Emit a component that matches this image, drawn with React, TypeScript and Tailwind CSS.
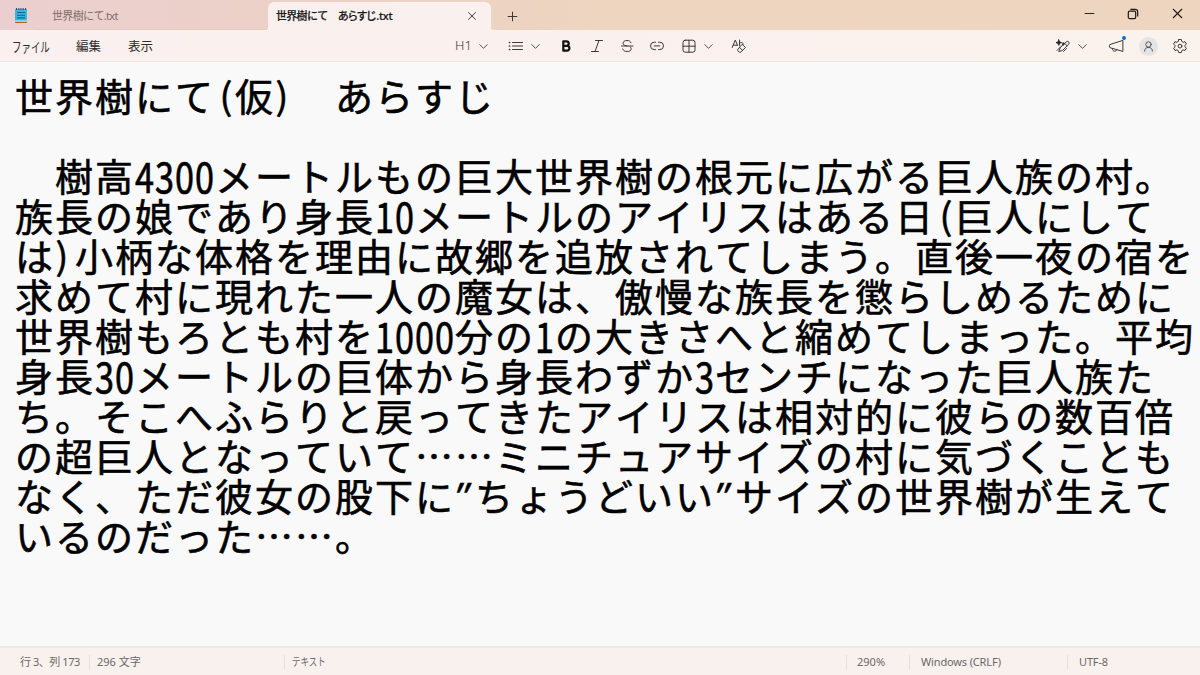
import React from "react";
import { ChevronDown, Minus, Plus, X } from "lucide-react";

const LINES = [
  "世界樹にて(仮)　あらすじ",
  "",
  "　樹高4300メートルもの巨大世界樹の根元に広がる巨人族の村。",
  "族長の娘であり身長10メートルのアイリスはある日(巨人にして",
  "は)小柄な体格を理由に故郷を追放されてしまう。直後一夜の宿を",
  "求めて村に現れた一人の魔女は、傲慢な族長を懲らしめるために",
  "世界樹もろとも村を1000分の1の大きさへと縮めてしまった。平均",
  "身長30メートルの巨体から身長わずか3センチになった巨人族た",
  "ち。そこへふらりと戻ってきたアイリスは相対的に彼らの数百倍",
  "の超巨人となっていて……ミニチュアサイズの村に気づくことも",
  "なく、ただ彼女の股下に\"ちょうどいい\"サイズの世界樹が生えて",
  "いるのだった……。",
];

// Half-width characters take exactly half of a full-width cell
function HalfChar({ char }: { char: string }) {
  let shape = "scale-x-[0.9] scale-y-[1.1]";
  if (char === "(") shape = "translate-x-[1px] scale-y-[0.96]";
  if (char === ")") shape = "-translate-x-[3px] scale-y-[0.96]";
  if (char === '"') shape = "-translate-x-[4px] -translate-y-[1px] -skew-x-[20deg] scale-y-[0.85]";

  return (
    <span className="inline-flex w-5 justify-center leading-[34px] tracking-normal">
      <span className={`inline-block ${shape}`}>{char}</span>
    </span>
  );
}

function EditorLine({ text }: { text: string }) {
  return (
    <div className="h-10 whitespace-pre">
      {text.split(/([0-9()"])/).map((part, i) =>
        /^[0-9()"]$/.test(part) ? <HalfChar key={i} char={part} /> : <React.Fragment key={i}>{part}</React.Fragment>
      )}
    </div>
  );
}

function NotepadIcon() {
  return (
    <svg width="14" height="17" viewBox="0 0 14 17">
      <rect x="1" y="13" width="12" height="3" rx="0.8" fill="#b45f22" />
      <rect x="1" y="2" width="12" height="12.3" rx="0.8" fill="#35b7dc" />
      <rect x="1" y="13.6" width="12" height="1" fill="#eef7fa" />
      <path d="M2.5 1v2M4.8 1v2M7 1v2M9.2 1v2M11.5 1v2" stroke="#14546f" strokeWidth="1" />
      <path d="M3 5.5h8M3 8.2h8M3 10.9h8" stroke="#0c6688" strokeWidth="1.1" />
    </svg>
  );
}

function RestoreIcon() {
  return (
    <svg width="12" height="12" viewBox="0 0 12 12" fill="none" stroke="#1b1918" strokeWidth="1.2">
      <rect x="1.3" y="3.2" width="7.4" height="7.4" rx="1.4" />
      <path d="M3.4 1.3h4.9a2.4 2.4 0 0 1 2.4 2.4v4.9" />
    </svg>
  );
}

interface GlyphProps {
  children: React.ReactNode;
  size?: number;
}

function Glyph({ children, size = 16 }: GlyphProps) {
  return (
    <svg width={size} height={size} viewBox="0 0 16 16" fill="none" stroke="#3b3837" strokeWidth="1" strokeLinecap="round" strokeLinejoin="round">
      {children}
    </svg>
  );
}

function Cell({ children, className = "" }: { children: React.ReactNode; className?: string }) {
  return <button className={`flex h-7 w-[30px] shrink-0 items-center justify-center ${className}`}>{children}</button>;
}

function Chevron({ className = "" }: { className?: string }) {
  return (
    <span className={`flex w-[10px] shrink-0 justify-center ${className}`}>
      <ChevronDown size={15} strokeWidth={1.5} className="shrink-0 text-[#4a4645]" />
    </span>
  );
}

function TitleBar() {
  return (
    <header className="flex h-[30px] shrink-0 bg-linear-to-r from-[#ebcfd0] via-[#ebd1c6] via-25% to-[#edd5c0] to-50%">
      <div className="flex w-[37px] items-center pl-[14px]">
        <NotepadIcon />
      </div>
      <div className="flex w-[231px] items-center border-b border-[#e8c9bf] pl-[15px] pt-[3px] text-[11px] tracking-[-0.65px] text-[#7e6d6b]">
        世界樹にて.txt
      </div>
      <div className="relative mt-[2px] flex w-[223px] items-center justify-between rounded-t-[6px] bg-[#faf1ee] pl-[8px] pr-[13px] text-[11px] font-medium text-[#1c1a1a] [-webkit-text-stroke:0.2px_#1c1a1a]">
        <span className="absolute -left-[3px] bottom-0 h-[3px] w-[3px] bg-[radial-gradient(circle_at_top_left,transparent_3px,#faf1ee_3px)]" />
        <span className="whitespace-pre pt-px tracking-[-0.7px]">
          世界樹にて　<span className="tracking-[-1.6px]">あらすじ</span><span className="ml-px tracking-[-0.3px]">.txt</span>
        </span>
        <X size={14} strokeWidth={1.6} className="-mr-px -mt-px text-[#3b3837]" />
        <span className="absolute -right-[3px] bottom-0 h-[3px] w-[3px] bg-[radial-gradient(circle_at_top_right,transparent_3px,#faf1ee_3px)]" />
      </div>
      <div className="flex w-[43px] items-center justify-center pt-[3px]">
        <Plus size={15} strokeWidth={1.6} className="text-[#3b3837]" />
      </div>
      <div className="ml-auto flex items-center pb-[3px]">
        <span className="flex w-[43px] justify-center">
          <Minus size={15} strokeWidth={1.5} className="text-[#1b1918]" />
        </span>
        <span className="flex w-[43px] justify-center">
          <RestoreIcon />
        </span>
        <span className="flex w-[46px] justify-center">
          <X size={17} strokeWidth={1.6} className="text-[#1b1918]" />
        </span>
      </div>
    </header>
  );
}

function Toolbar() {
  return (
    <div className="flex h-8 shrink-0 items-center border-b border-[#eee6e3] bg-linear-to-r from-[#faf0ef] to-[#faf2ed] pt-px text-[12.5px] text-[#2e2b2b]">
      <nav className="flex w-[448px] items-center pt-[2px]">
        <span className="ml-[12px] w-[64px] origin-left scale-x-[0.7] whitespace-nowrap text-[13.5px]">ファイル</span>
        <span className="w-[52px]">編集</span>
        <span>表示</span>
      </nav>

      <Cell>
        <span className="pl-px text-[13px] font-light text-[#3b3837]">H1</span>
      </Cell>
      <Chevron />
      <Cell className="ml-[12.5px]">
        <Glyph>
          <path d="M4.5 4.500h10M4.500 8h10M4.500 11.500h10" />
          <path d="M1.500 4.500h.1M1.500 8h.1M1.500 11.500h.1" strokeWidth="1.700" />
        </Glyph>
      </Cell>
      <Chevron />
      <Cell className="ml-[10.5px]">
        <Glyph>
          <path d="M5.300 3.300h3.200a2.100 2.100 0 0 1 0 4.500H5.300zM5.300 7.800H9a2.450 2.450 0 0 1 0 4.900H5.300z" stroke="#111" strokeWidth="2.200" />
        </Glyph>
      </Cell>
      <Cell className="pl-px">
        <Glyph>
          <path d="M6.500 2.500h7M2.500 13.500h7M10 2.500L6 13.500" />
        </Glyph>
      </Cell>
      <Cell className="pl-px">
        <Glyph>
          <path d="M12 4.800C11.500 3.200 10 2.500 8 2.500c-2.300 0-3.900 1-3.900 2.700C4.100 7 5.800 7.500 8 8M2.500 8h11.500M11 8.800c.8.500 1.200 1.200 1.200 2.100 0 1.600-1.600 2.600-4 2.600-2.200 0-3.900-.9-4.500-2.500" />
        </Glyph>
      </Cell>
      <Cell className="pl-px">
        <Glyph>
          <path d="M6.500 4.200H5.200a3.700 3.700 0 0 0 0 7.400h1.300M9.500 4.200h1.300a3.700 3.700 0 0 1 0 7.400H9.500M5.200 7.900h5.600" />
        </Glyph>
      </Cell>
      <Cell className="ml-[2.5px]">
        <Glyph>
          <rect x="2" y="2.200" width="12" height="12" rx="2.200" />
          <path d="M8 2.200v12M2 8.200h12" />
        </Glyph>
      </Cell>
      <Chevron className="-ml-[0.5px]" />
      <Cell className="ml-[11px]">
        <Glyph>
          <path d="M1.200 9.500L4.300 2l2.300 5.500M2.200 7.200h4M8.600 2v5.500M8.600 5.200c.6-1.200 3.600-1.200 3.600 1" />
          <path d="M11.400 6.500l3 3-4.700 4.700a1 1 0 0 1-1.400 0l-1.500-1.500a1 1 0 0 1 0-1.400zM8.500 9.400l3 3" />
        </Glyph>
      </Cell>

      <div className="ml-auto flex items-center pr-[5px]">
        <Cell className="pl-[2px]">
          <Glyph>
            <path d="M3.800 1.800l.8 2 2 .8-2 .8-.8 2-.8-2-2-.8 2-.8zM8.200 4.700l.4 1 .9.400-.9.400-.4 1-.4-1-.9-.4.9-.4z" fill="#222" stroke="#222" strokeWidth="0.800" />
            <path d="M5.200 9.700l-1.400 3.900 3.900-1.300 6-6.100a1.300 1.300 0 0 0-2.500-2.300zM9.800 5.500l2.300 2.300M2 12.500l4-4M8.500 13.500l3-3" />
          </Glyph>
        </Cell>
        <Chevron />
        <Cell className="relative ml-[14px]">
          <Glyph>
            <path d="M14.500 2.500L2 6.500a.8.800 0 0 0-.5.800v1.600c0 .4.200.7.500.8l12.500 3.600zM4.300 10.500c0 1.700 1 2.700 2.300 2.700s2-.7 2.200-1.500" />
          </Glyph>
          <span className="absolute right-[5px] top-[4px] h-1 w-1 rounded-full bg-[#0a6bd0]" />
        </Cell>
        <Cell className="ml-[2px]">
          <span className="flex h-[19px] w-[19px] items-center justify-center rounded-full bg-[#e5e4e4]">
            <Glyph size={13}>
              <circle cx="8" cy="5.500" r="3.300" />
              <path d="M3.200 13.700c0-3 2-4.600 4.800-4.600s4.800 1.600 4.800 4.600" />
            </Glyph>
          </span>
        </Cell>
        <Cell className="ml-[2px]">
          <Glyph>
            <path d="M6.700 1.500h2.600l.5 2 1.300.8 2-.6 1.300 2.200L13 7.400v1.400l1.400 1.400-1.300 2.200-2-.5-1.300.7-.5 2H6.700l-.5-2-1.300-.7-2 .5-1.300-2.200L3 8.800V7.400L1.600 5.900l1.300-2.200 2 .6 1.300-.8z" />
            <circle cx="8" cy="8.100" r="1.900" />
          </Glyph>
        </Cell>
      </div>
    </div>
  );
}

function StatusBar() {
  return (
    <footer className="flex h-[29px] shrink-0 items-center border-t-2 border-[#f0e8e6] bg-[#f9f1ee] pt-px text-[11px] text-[#6d6867]">
      <span className="w-[89px] whitespace-nowrap pl-5 tracking-[-0.45px]">行 3、列 173</span>
      <span className="h-[15px] w-px bg-[#e7dfdd]" />
      <span className="w-[194px] pl-[7px]">296 文字</span>
      <span className="h-[15px] w-px bg-[#e7dfdd]" />
      <span className="w-[561px] pl-[7px]">
        <span className="inline-block origin-left scale-x-[0.77]">テキスト</span>
      </span>
      <span className="h-[15px] w-px bg-[#e7dfdd]" />
      <span className="w-[62px] pl-[10px]">290%</span>
      <span className="h-[15px] w-px bg-[#e7dfdd]" />
      <span className="w-[157px] pl-[11px] tracking-[-0.15px]">Windows (CRLF)</span>
      <span className="h-[15px] w-px bg-[#e7dfdd]" />
      <span className="pl-[11px] tracking-[-0.15px]">UTF-8</span>
    </footer>
  );
}

export default function App() {
  return (
    <div className="flex h-screen w-full flex-col overflow-hidden bg-[#f9f9f9] font-['Noto_Sans','Noto_Sans_CJK_JP',sans-serif]">
      <TitleBar />
      <Toolbar />
      <main className="flex-1 overflow-hidden pl-[15px] pt-[13px] font-['Noto_Sans_CJK_JP',sans-serif] text-[38px] leading-10 tracking-[2px] text-black [font-feature-settings:'kern'_0,'palt'_0,'chws'_0] [font-kerning:none] [text-spacing-trim:space-all] [-webkit-text-stroke:0.6px_black]">
        {LINES.map((line, i) => (
          <EditorLine key={i} text={line} />
        ))}
      </main>
      <StatusBar />
    </div>
  );
}
